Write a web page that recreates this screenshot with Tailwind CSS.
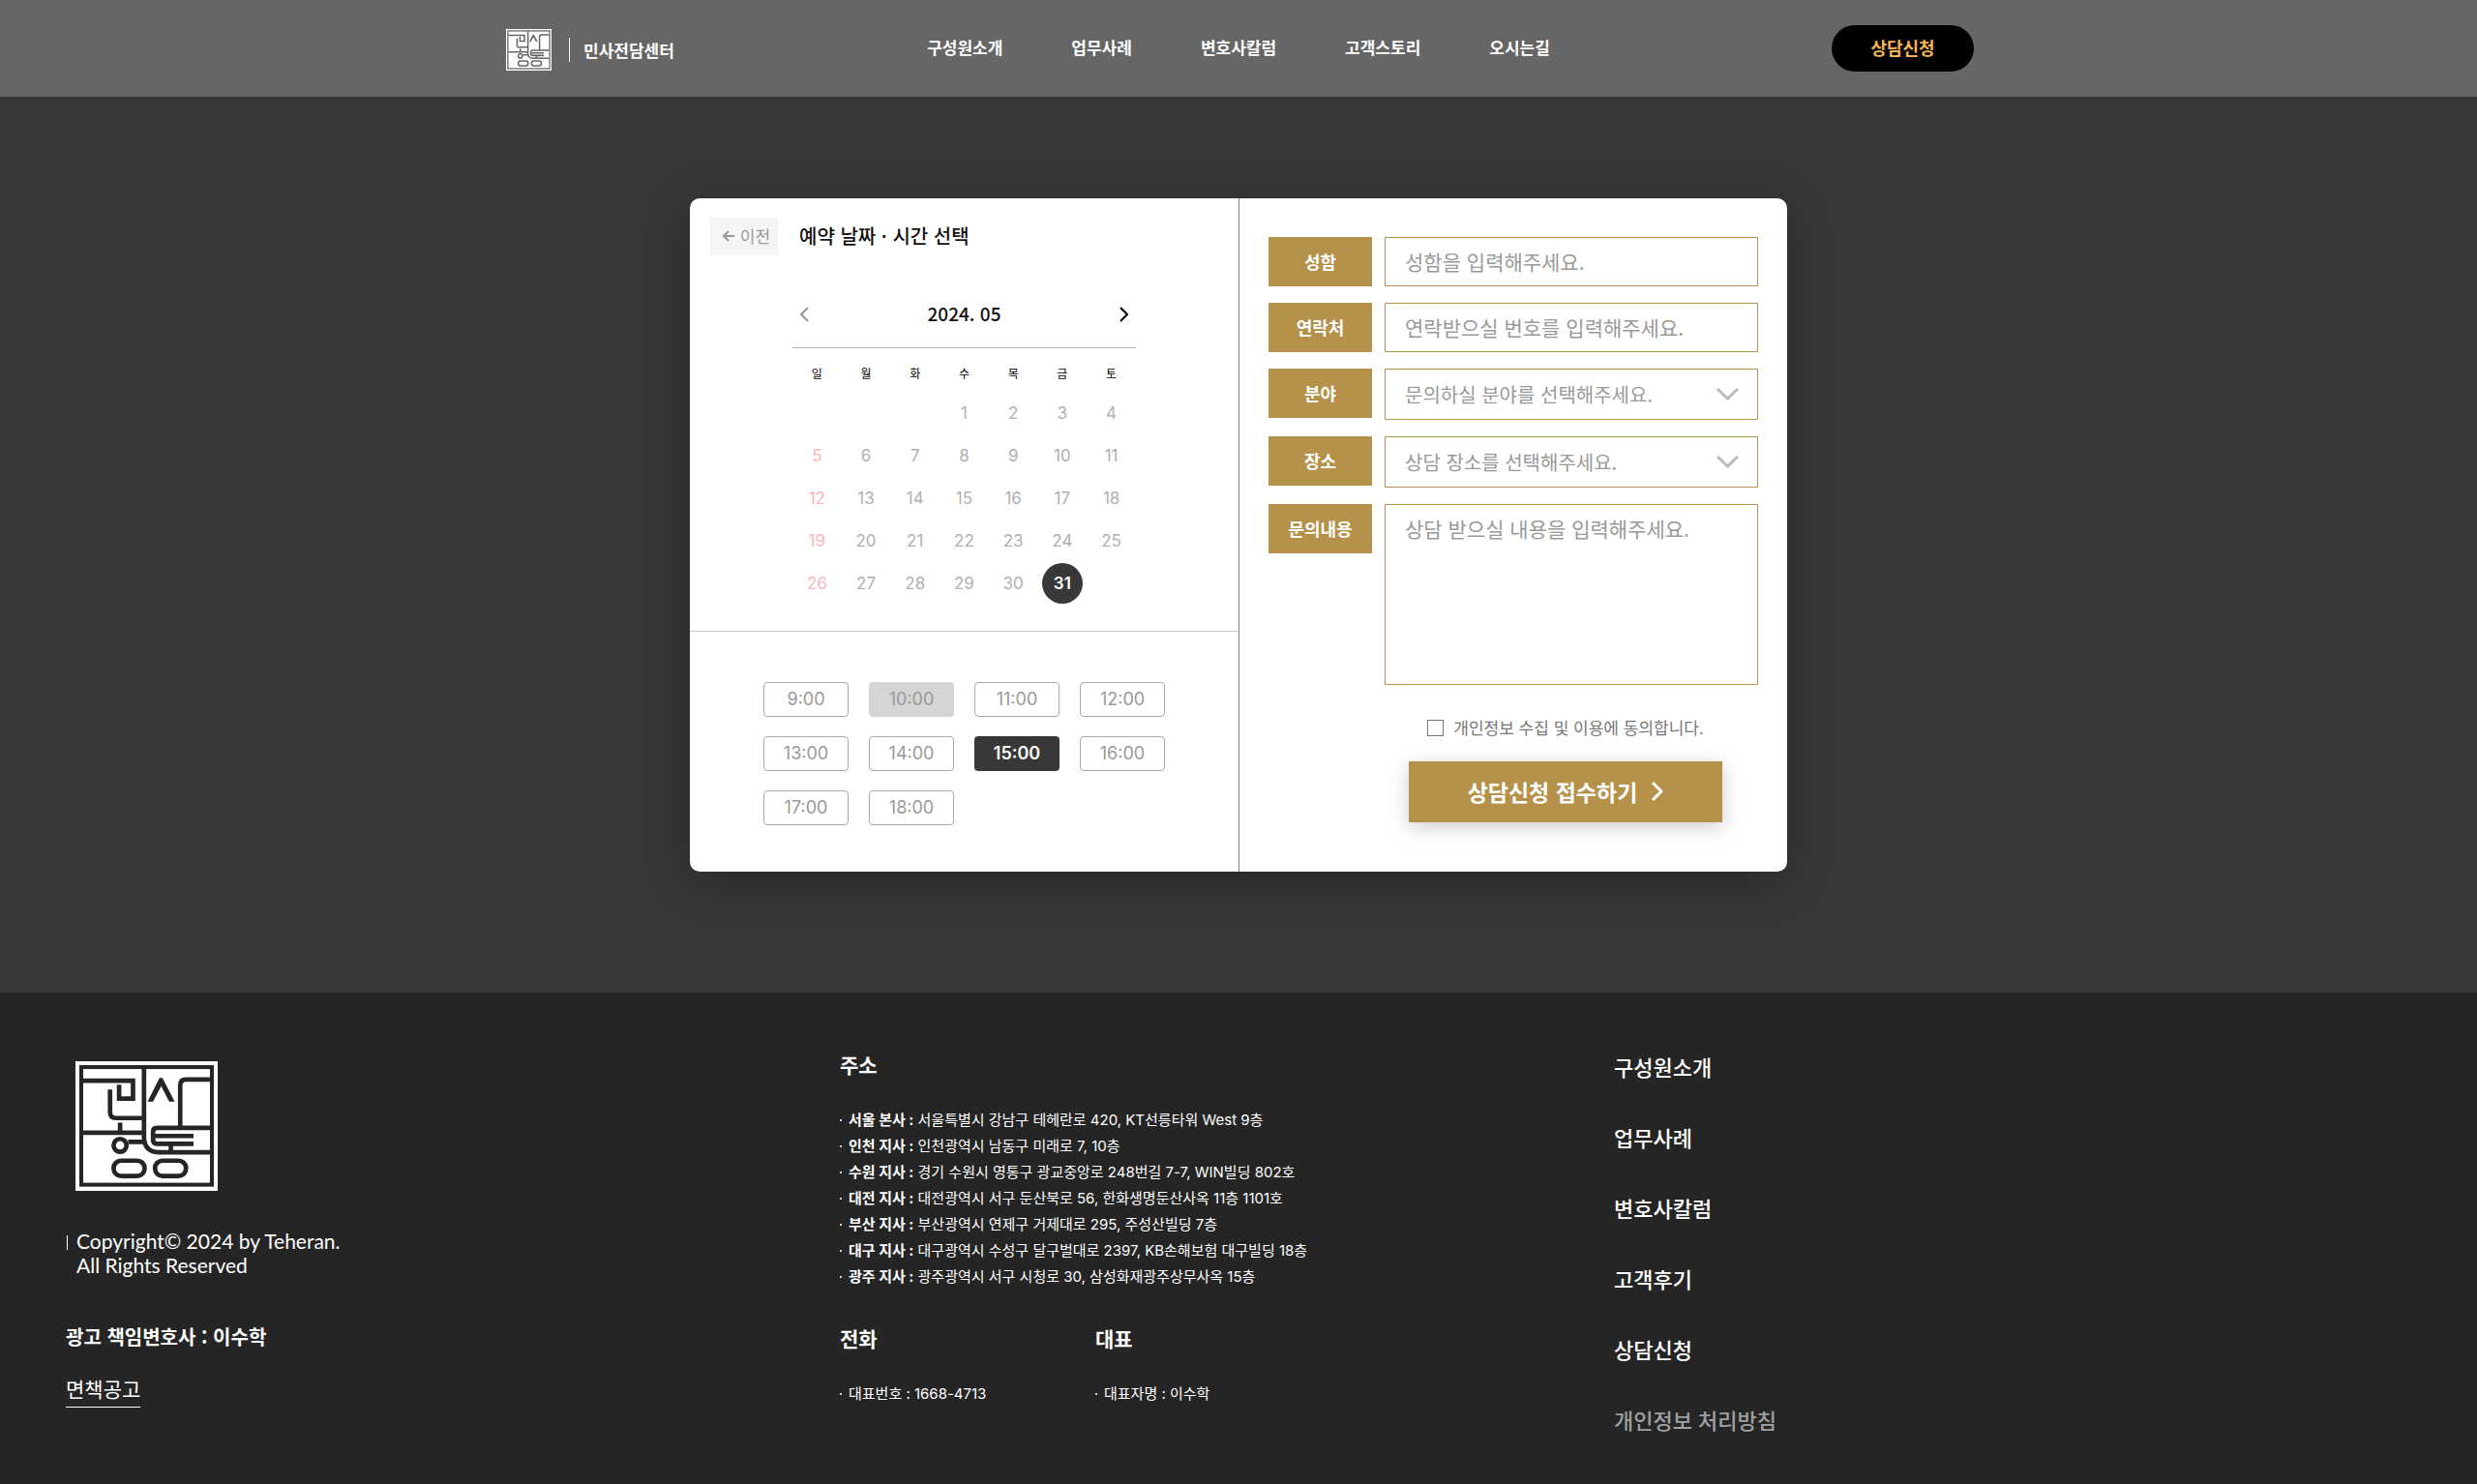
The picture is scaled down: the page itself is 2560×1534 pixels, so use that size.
<!DOCTYPE html>
<html lang="ko">
<head>
<meta charset="utf-8">
<meta name="viewport" content="width=device-width, initial-scale=1">
<title>민사전담센터 상담신청</title>
<script src="https://cdn.jsdelivr.net/npm/@tailwindcss/browser@4"></script>
</head>
<body class="min-h-screen flex flex-col bg-[#252525] font-['Noto_Sans_CJK_KR',sans-serif]">

<svg class="hidden" aria-hidden="true">
  <symbol id="seal" viewBox="115 83 440 399" preserveAspectRatio="none">
    <rect x="115" y="83" width="440" height="399" fill="#fff"/>
    <g fill="none" stroke="currentColor" stroke-width="14">
      <rect x="133" y="101" width="404" height="362" stroke-width="12"/>
      <path d="M139 143H293V198H250V155"/>
      <path d="M222 170V240Q222 258 240 258H321"/>
      <path d="M327 107V320Q330 362 372 363H531"/>
      <path d="M139 303H321M253 272V303M278 331H328"/>
      <circle cx="253" cy="342" r="20"/>
      <rect x="233" y="389" width="96" height="47" rx="23"/>
      <rect x="361" y="389" width="96" height="47" rx="23"/>
      <path d="M439 287V157Q439 139 457 139H531"/>
      <path d="M531 288H367Q355 288 355 300V325Q355 337 367 337H480M355 313H480M410 337V363"/>
    </g>
    <path fill="currentColor" d="M338 207L375 134H384L422 207H405L380 160L355 207Z"/>
  </symbol>
</svg>

<header class="h-[100px] bg-[#666666] text-white">
  <div class="mx-auto grid h-full max-w-[1520px] grid-cols-[1fr_auto_1fr] items-center">
    <a href="#" class="flex items-center pl-[3px] pt-[3px]">
      <svg class="h-[43px] w-[47px] text-[#666666]" role="img" aria-label="민사형통"><use href="#seal"/></svg>
      <span class="ml-[18px] h-[25px] w-px bg-white"></span>
      <span class="ml-[14px] text-[17px] leading-6 font-bold">민사전담센터</span>
    </a>
    <nav class="flex gap-[71px] pb-[3px] text-[17px] leading-6 font-bold">
      <a href="#">구성원소개</a><a href="#">업무사례</a><a href="#">변호사칼럼</a><a href="#">고객스토리</a><a href="#">오시는길</a>
    </nav>
    <button type="button" class="h-12 w-[147px] justify-self-end rounded-full bg-black pb-[3px] text-[18px] leading-6 font-bold text-[#f8b551]">상담신청</button>
  </div>
</header>

<main class="bg-[#383838] pt-[105px] pb-[125px]">
  <div class="mx-auto grid max-w-[1134px] grid-cols-2 overflow-hidden rounded-[10px] bg-white shadow-[0_10px_50px_rgba(0,0,0,0.3)]">
    <div>
      <section class="border-b border-[#c8c8c8] pt-5 pb-[27px]">
        <div class="flex items-center pl-[21px]">
          <button type="button" class="flex h-[39px] w-[70px] items-center justify-center gap-[6px] bg-[#f5f5f5] pb-px pl-1 text-[17px] leading-6 text-[#999999]">
            <svg class="h-3 w-[13px]" viewBox="0 0 13 12" fill="none" stroke="currentColor" stroke-width="2"><path d="M13 6H2M7 1L2 6L7 11"/></svg>이전
          </button>
          <h2 class="ml-[22px] pb-0.5 text-[20px] leading-7 font-medium text-[#111111]">예약 날짜 · 시간 선택</h2>
        </div>
        <div class="mx-auto mt-9 w-[355px]">
          <div class="flex h-[60px] items-center justify-between border-b border-[#b4b4b4] pr-2 pb-[9px] pl-2">
            <button type="button" aria-label="이전 달" class="text-[#999999]"><svg class="h-4 w-[9px]" viewBox="0 0 9 16" fill="none" stroke="currentColor" stroke-width="2"><path d="M8 1L1 8L8 15"/></svg></button>
            <span class="pb-[3px] text-[19px] leading-7 font-medium text-[#111111]">2024. 05</span>
            <button type="button" aria-label="다음 달" class="text-black"><svg class="h-4 w-[9px]" viewBox="0 0 9 16" fill="none" stroke="currentColor" stroke-width="2"><path d="M1 1L8 8L1 15"/></svg></button>
          </div>
          <table class="w-full table-fixed text-center">
            <thead>
              <tr class="h-[45px] text-[12px] leading-4 text-black">
                <th class="pt-[7px] font-normal">일</th><th class="pt-[7px] font-normal">월</th><th class="pt-[7px] font-normal">화</th><th class="pt-[7px] font-normal">수</th><th class="pt-[7px] font-normal">목</th><th class="pt-[7px] font-normal">금</th><th class="pt-[7px] font-normal">토</th>
              </tr>
            </thead>
            <tbody class="font-[Inter,sans-serif] text-[17px] leading-6 text-[#b0b0b0]">
              <tr class="h-11"><td class="text-[#fab6bb]"></td><td></td><td></td><td>1</td><td>2</td><td>3</td><td>4</td></tr>
              <tr class="h-11"><td class="text-[#fab6bb]">5</td><td>6</td><td>7</td><td>8</td><td>9</td><td>10</td><td>11</td></tr>
              <tr class="h-11"><td class="text-[#fab6bb]">12</td><td>13</td><td>14</td><td>15</td><td>16</td><td>17</td><td>18</td></tr>
              <tr class="h-11"><td class="text-[#fab6bb]">19</td><td>20</td><td>21</td><td>22</td><td>23</td><td>24</td><td>25</td></tr>
              <tr class="h-11"><td class="text-[#fab6bb]">26</td><td>27</td><td>28</td><td>29</td><td>30</td><td><button type="button" class="mx-auto flex size-[42px] items-center justify-center rounded-full bg-[#383838] font-semibold text-white">31</button></td><td></td></tr>
            </tbody>
          </table>
        </div>
      </section>
      <section class="grid grid-cols-[repeat(4,88px)] justify-center gap-x-[21px] gap-y-5 pt-[52px] font-[Inter,sans-serif] text-[18px] leading-6 text-[#999999]">
        <button type="button" class="h-9 rounded-[4px] border border-[#a9a9a9]">9:00</button>
        <button type="button" disabled class="h-9 rounded-[4px] bg-[#d5d5d5]">10:00</button>
        <button type="button" class="h-9 rounded-[4px] border border-[#a9a9a9]">11:00</button>
        <button type="button" class="h-9 rounded-[4px] border border-[#a9a9a9]">12:00</button>
        <button type="button" class="h-9 rounded-[4px] border border-[#a9a9a9]">13:00</button>
        <button type="button" class="h-9 rounded-[4px] border border-[#a9a9a9]">14:00</button>
        <button type="button" class="h-9 rounded-[4px] bg-[#383838] font-semibold text-white">15:00</button>
        <button type="button" class="h-9 rounded-[4px] border border-[#a9a9a9]">16:00</button>
        <button type="button" class="h-9 rounded-[4px] border border-[#a9a9a9]">17:00</button>
        <button type="button" class="h-9 rounded-[4px] border border-[#a9a9a9]">18:00</button>
      </section>
    </div>

    <form class="border-l border-[#808080] px-[30px] pt-10 pb-[51px]">
      <div class="grid grid-cols-[107px_1fr] items-start gap-x-[13px] gap-y-[17px]">
        <label for="name" class="flex h-[51px] items-center justify-center bg-[#b59149] pb-0.5 text-[18px] leading-6 font-bold text-white">성함</label>
        <input id="name" type="text" placeholder="성함을 입력해주세요." class="h-[51px] w-full border border-[#b59149] px-5 pb-0.5 text-[21px] leading-7 placeholder:text-[#999999]">
        <label for="phone" class="flex h-[51px] items-center justify-center bg-[#b59149] pb-0.5 text-[18px] leading-6 font-bold text-white">연락처</label>
        <input id="phone" type="tel" placeholder="연락받으실 번호를 입력해주세요." class="h-[51px] w-full border border-[#b59149] px-5 pb-0.5 text-[21px] leading-7 placeholder:text-[#999999]">
        <label for="field" class="flex h-[51px] items-center justify-center bg-[#b59149] pb-0.5 text-[18px] leading-6 font-bold text-white">분야</label>
        <div class="relative">
          <select id="field" class="block h-[53px] w-full appearance-none border border-[#b59149] px-5 text-[20px] leading-7 text-[#999999]"><option>문의하실 분야를 선택해주세요.</option></select>
          <svg class="pointer-events-none absolute top-[20px] right-5 h-[13px] w-[23px]" viewBox="0 0 23 13" fill="none" stroke="#bbbbbb" stroke-width="3"><path d="M1 1L11.5 11L22 1"/></svg>
        </div>
        <label for="place" class="flex h-[51px] items-center justify-center bg-[#b59149] pb-0.5 text-[18px] leading-6 font-bold text-white">장소</label>
        <div class="relative">
          <select id="place" class="block h-[53px] w-full appearance-none border border-[#b59149] px-5 text-[20px] leading-7 text-[#999999]"><option>상담 장소를 선택해주세요.</option></select>
          <svg class="pointer-events-none absolute top-[20px] right-5 h-[13px] w-[23px]" viewBox="0 0 23 13" fill="none" stroke="#bbbbbb" stroke-width="3"><path d="M1 1L11.5 11L22 1"/></svg>
        </div>
        <label for="memo" class="flex h-[51px] items-center justify-center bg-[#b59149] pb-0.5 text-[18px] leading-6 font-bold text-white">문의내용</label>
        <textarea id="memo" placeholder="상담 받으실 내용을 입력해주세요." class="block h-[187px] w-full resize-none border border-[#b59149] px-5 py-[10px] text-[21px] leading-7 placeholder:text-[#999999]"></textarea>
      </div>
      <div class="mt-[32px] mr-3 ml-[120px] flex flex-col items-center gap-[23px]">
        <label class="flex h-6 items-center gap-[10px] text-[17px] leading-6 text-[#777777]">
          <input type="checkbox" class="size-[17px] appearance-none border border-[#767676] bg-white">개인정보 수집 및 이용에 동의합니다.
        </label>
        <button type="submit" class="flex h-[63px] w-[324px] items-center justify-center gap-[15px] bg-[#b59149] pb-0.5 text-[23px] leading-8 font-bold text-white shadow-[0_5px_20px_rgba(0,0,0,0.2)]">
          상담신청 접수하기
          <svg class="h-5 w-3" viewBox="0 0 12 20" fill="none" stroke="currentColor" stroke-width="3"><path d="M1 1L10 10L1 19"/></svg>
        </button>
      </div>
    </form>
  </div>
</main>

<footer class="grid grow grid-cols-3 bg-[#252525] pr-[92px] pb-[48px] pl-[68px] text-white">
  <div class="pt-[71px]">
    <svg class="ml-[10px] h-[134px] w-[147px] text-[#252525]" role="img" aria-label="민사형통"><use href="#seal"/></svg>
    <div class="mt-[39px] flex gap-[9px] pl-px">
      <span class="mt-[7px] h-[15px] w-px bg-white"></span>
      <p class="font-[Lato,sans-serif] text-[21px] leading-[25px]">Copyright© 2024 by Teheran.<br>All Rights Reserved</p>
    </div>
    <p class="mt-[46px] text-[20px] leading-8 font-bold">광고 책임변호사 : 이수학</p>
    <a href="#" class="mt-[20px] inline-block border-b border-white pb-[2px] text-[21px] leading-[34px]">면책공고</a>
  </div>

  <div class="pt-[58px]">
    <h3 class="text-[21px] leading-8 font-bold">주소</h3>
    <ul class="mt-[28px] font-[Inter,'Noto_Sans_CJK_KR',sans-serif] text-[15px] leading-[27px]">
      <li class="flex items-center gap-[7px]"><i class="size-[2px] bg-white/80"></i><span><strong>서울 본사 :</strong> 서울특별시 강남구 테헤란로 420, KT선릉타워 West 9층</span></li>
      <li class="flex items-center gap-[7px]"><i class="size-[2px] bg-white/80"></i><span><strong>인천 지사 :</strong> 인천광역시 남동구 미래로 7, 10층</span></li>
      <li class="flex items-center gap-[7px]"><i class="size-[2px] bg-white/80"></i><span><strong>수원 지사 :</strong> 경기 수원시 영통구 광교중앙로 248번길 7-7, WIN빌딩 802호</span></li>
      <li class="flex items-center gap-[7px]"><i class="size-[2px] bg-white/80"></i><span><strong>대전 지사 :</strong> 대전광역시 서구 둔산북로 56, 한화생명둔산사옥 11층 1101호</span></li>
      <li class="flex items-center gap-[7px]"><i class="size-[2px] bg-white/80"></i><span><strong>부산 지사 :</strong> 부산광역시 연제구 거제대로 295, 주성산빌딩 7층</span></li>
      <li class="flex items-center gap-[7px]"><i class="size-[2px] bg-white/80"></i><span><strong>대구 지사 :</strong> 대구광역시 수성구 달구벌대로 2397, KB손해보험 대구빌딩 18층</span></li>
      <li class="flex items-center gap-[7px]"><i class="size-[2px] bg-white/80"></i><span><strong>광주 지사 :</strong> 광주광역시 서구 시청로 30, 삼성화재광주상무사옥 15층</span></li>
    </ul>
    <div class="mt-[34px] grid grid-cols-[264px_1fr]">
      <div>
        <h3 class="text-[21px] leading-8 font-bold">전화</h3>
        <p class="mt-[28px] flex items-center gap-[7px] font-[Inter,'Noto_Sans_CJK_KR',sans-serif] text-[15px] leading-[27px]"><i class="size-[2px] bg-white/80"></i>대표번호 : 1668-4713</p>
      </div>
      <div>
        <h3 class="text-[21px] leading-8 font-bold">대표</h3>
        <p class="mt-[28px] flex items-center gap-[7px] font-[Inter,'Noto_Sans_CJK_KR',sans-serif] text-[15px] leading-[27px]"><i class="size-[2px] bg-white/80"></i>대표자명 : 이수학</p>
      </div>
    </div>
  </div>

  <nav class="flex flex-col items-start gap-[41px] pt-[60px] text-[22px] leading-8 font-medium">
    <a href="#">구성원소개</a><a href="#">업무사례</a><a href="#">변호사칼럼</a><a href="#">고객후기</a><a href="#">상담신청</a><a href="#" class="text-[#a0a0a0]">개인정보 처리방침</a>
  </nav>
</footer>
</body>
</html>
